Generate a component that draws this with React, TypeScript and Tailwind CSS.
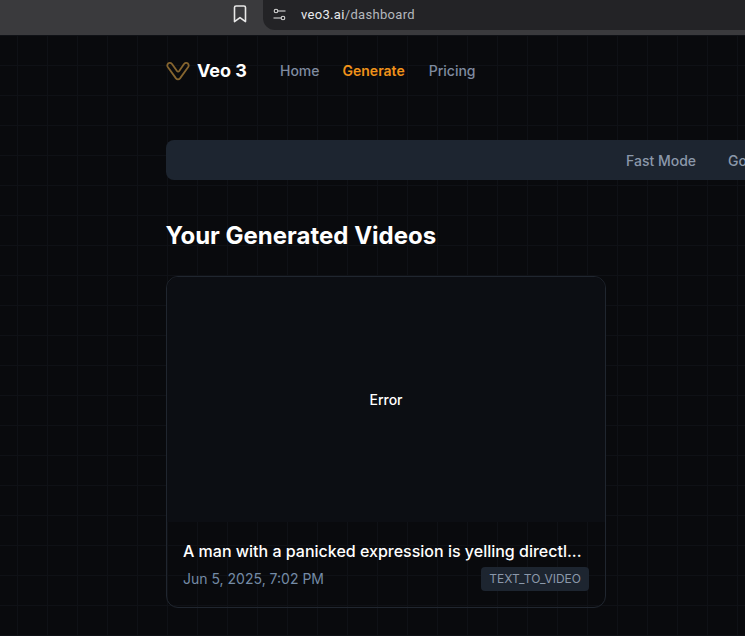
import React from "react";

export default function App() {
  return (
    <div className="w-[745px] h-[636px] overflow-hidden flex flex-col bg-[#090a0d] font-['Inter',sans-serif]">
      {/* Browser chrome */}
      <div className="h-[35px] shrink-0 bg-[#3a3a3d] flex items-start">
        <div className="ml-[233px] mt-[5px] w-[14px] h-[19px] text-[#e8e8e8]">
          <svg width="14" height="18" viewBox="0 0 14 18" fill="none" stroke="currentColor" strokeWidth="1.6" strokeLinejoin="round">
            <path d="M1.5 2.6C1.5 1.7 2.2 1 3.1 1h7.8c.9 0 1.6.7 1.6 1.6V16.6L7 12.6l-5.5 4z" />
          </svg>
        </div>
        <div className="ml-[16px] h-[30px] flex-1 bg-[#232326] rounded-bl-[12px] flex items-center pl-[10px]">
          <svg width="13" height="13" viewBox="0 0 13 13" fill="none" stroke="#d8d8d8" strokeWidth="1.1" className="-mt-[2px]">
            <circle cx="3" cy="3" r="1.8" />
            <path d="M5 3h7.5" />
            <circle cx="10" cy="10" r="1.8" />
            <path d="M0.5 10h7.5" />
          </svg>
          <span className="ml-[15px] -mt-[2px] text-[13px] leading-none text-[#b4b8bd] font-['Roboto',sans-serif] tracking-[0.32px]">
            <span className="text-[#e8eaed]">veo3.ai</span>/dashboard
          </span>
        </div>
      </div>

      {/* Page */}
      <div className="relative flex-1 pl-[166px] bg-[#090a0d] bg-[linear-gradient(to_right,#0f1116_1px,transparent_1px),linear-gradient(to_bottom,#0f1116_1px,transparent_1px)] bg-[size:30px_30px] bg-[position:17px_0px]">
        <nav className="h-[72px] flex items-center">
          <svg width="24" height="20" viewBox="0 0 24 20" fill="none" stroke="#86652f" strokeWidth="1.8" strokeLinejoin="round">
            <path d="M1.5 3.5C2.4 1.6 4.6 1.4 6 3l5 7c.6.8 1.6.8 2.2 0L18 3c1.4-1.6 3.6-1.4 4.5.5.4.9.2 1.7-.3 2.5L14 17.4c-1 1.3-3 1.3-4 0L1.8 6c-.5-.8-.7-1.6-.3-2.5z" />
          </svg>
          <span className="ml-[8px] -translate-x-px text-[18px] font-bold text-white leading-none">Veo 3</span>
          <span className="ml-[32px] -translate-y-px text-[14px] font-medium text-[#7f8ba0]">Home</span>
          <span className="ml-[23px] -translate-y-px text-[14px] font-semibold text-[#f0921a]">Generate</span>
          <span className="ml-[24px] -translate-y-px text-[14px] font-medium text-[#7f8ba0]">Pricing</span>
        </nav>

        <div className="mt-[33px] w-[760px] h-[40px] bg-[#1d2530] rounded-[8px] flex items-center pl-[460px] gap-[32px]">
          <span className="text-[14px] font-medium text-[#8b98aa] whitespace-nowrap">Fast Mode</span>
          <span className="text-[14px] font-medium text-[#8b98aa] whitespace-nowrap">Go</span>
        </div>

        <h2 className="mt-[40px] text-[24px] leading-[32px] font-bold text-white -ml-[0.5px]">Your Generated Videos</h2>

        <div className="mt-[24px] w-[440px] h-[332px] rounded-[12px] border border-[#20262f] overflow-hidden flex flex-col">
          <div className="h-[245px] shrink-0 bg-[#0c0e13] flex items-center justify-center">
            <span className="text-[14px] font-medium text-white">Error</span>
          </div>
          <div className="px-[16px] pt-[17px]">
            <p className="text-[16px] leading-[24px] font-medium text-white truncate">
              A man with a panicked expression is yelling directl...
            </p>
            <div className="mt-[4px] flex items-center justify-between">
              <span className="-translate-y-px text-[14px] text-[#748ba6]">Jun 5, 2025, 7:02 PM</span>
              <span className="h-[24px] px-[8px] flex items-center rounded-[4px] bg-[#1d2530] text-[12px] text-[#8b98aa]">TEXT_TO_VIDEO</span>
            </div>
          </div>
        </div>
      </div>
    </div>
  );
}
